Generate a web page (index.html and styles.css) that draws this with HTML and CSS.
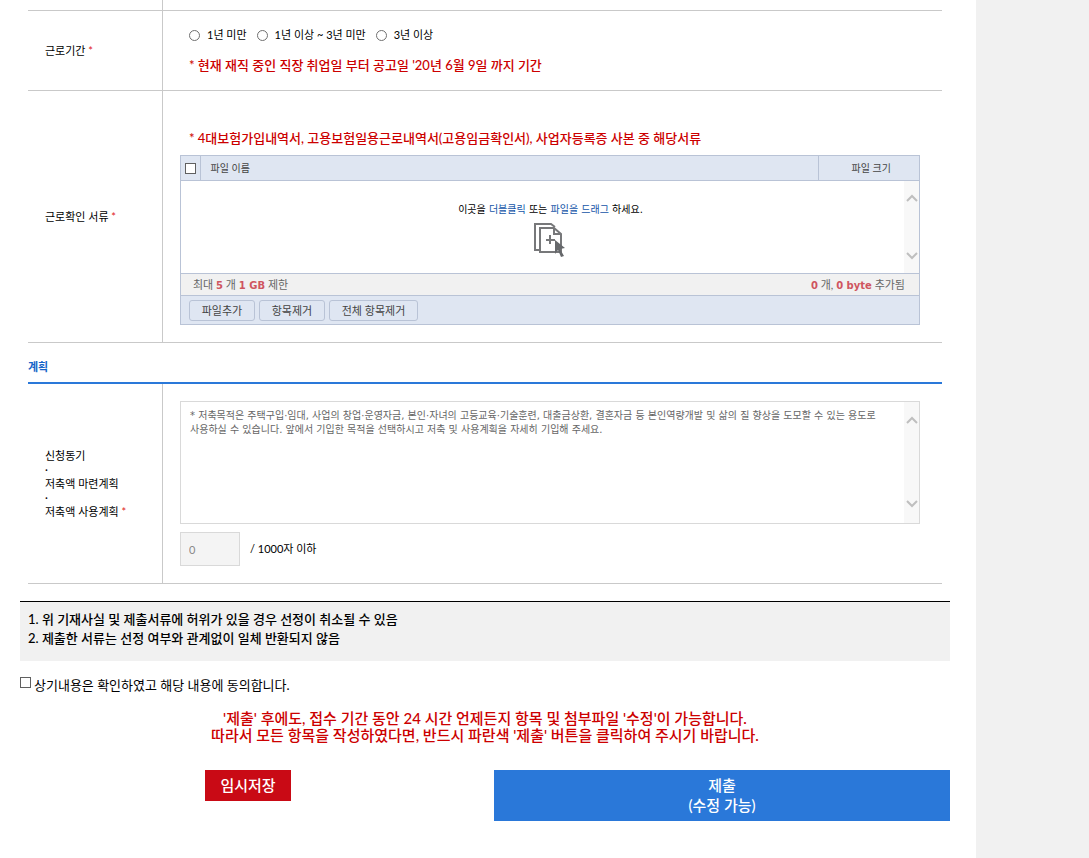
FILE: index.html
```html
<!DOCTYPE html>
<html lang="ko">
<head>
<meta charset="utf-8">
<meta name="viewport" content="width=device-width, initial-scale=1">
<title>신청서 작성</title>
<link rel="stylesheet" href="styles.css">
</head>
<body>
<main class="page">
  <form class="form">
    <section class="rows">
      <div class="row row-previous">
        <div class="row-label"></div>
        <div class="row-body"></div>
      </div>
      <div class="row" role="radiogroup" aria-labelledby="period-label">
        <div class="row-label" id="period-label"><span>근로기간 <span class="required">*</span></span></div>
        <div class="row-body period">
          <div class="radios">
            <label class="radio"><input type="radio" name="period" value="1">1년 미만</label>
            <label class="radio"><input type="radio" name="period" value="2">1년 이상 ~ 3년 미만</label>
            <label class="radio"><input type="radio" name="period" value="3">3년 이상</label>
          </div>
          <p class="hint">* 현재 재직 중인 직장 취업일 부터 공고일 '20년 6월 9일 까지 기간</p>
        </div>
      </div>
      <div class="row">
        <div class="row-label"><span>근로확인 서류 <span class="required">*</span></span></div>
        <div class="row-body documents">
          <p class="hint">* 4대보험가입내역서, 고용보험일용근로내역서(고용임금확인서), 사업자등록증 사본 중 해당서류</p>
          <div class="upload">
            <table class="files">
              <thead>
                <tr>
                  <th class="files-check"><input class="check" type="checkbox" aria-label="전체 선택"></th>
                  <th class="files-name">파일 이름</th>
                  <th class="files-size">파일 크기</th>
                </tr>
              </thead>
            </table>
            <div class="drop">
              <div class="drop-area">
                <p>이곳을 <span class="drop-key">더블클릭</span> 또는 <span class="drop-key">파일을 드래그</span> 하세요.</p>
                <svg class="drop-icon" viewBox="0 0 34 36" width="34" height="36" aria-hidden="true">
                  <g fill="none" stroke="#77787a" stroke-width="2">
                    <path d="M7 28H2V2h16l4 3"/>
                    <path d="M7 6h14l7 6v18H7z"/>
                    <path d="M21 6v6h7"/>
                    <path d="M17 13v9M13 18h9"/>
                  </g>
                  <path d="M22 18l10 8-5 1 4 7-3 1-3-7-3 4z" fill="#66686b"/>
                </svg>
              </div>
              <div class="scroll scroll-drop" aria-hidden="true">
                <svg viewBox="0 0 12 8" width="12" height="8"><path d="M1 7l5-5 5 5"/></svg>
                <svg viewBox="0 0 12 8" width="12" height="8"><path d="M1 1l5 5 5-5"/></svg>
              </div>
            </div>
            <div class="status">
              <span>최대 <b>5</b> 개 <b>1 GB</b> 제한</span>
              <span><b>0</b> 개, <b>0 byte</b> 추가됨</span>
            </div>
            <div class="tools">
              <button class="tool" type="button">파일추가</button>
              <button class="tool" type="button">항목제거</button>
              <button class="tool tool-all" type="button">전체 항목제거</button>
            </div>
          </div>
        </div>
      </div>
    </section>

    <section class="rows">
      <h2 class="heading">계획</h2>
      <div class="row">
        <label class="row-label" for="plan"><span>신청동기<br>·<br>저축액 마련계획<br>·<br>저축액 사용계획 <span class="required">*</span></span></label>
        <div class="row-body plan">
          <div class="plan-box">
            <textarea class="plan-text" id="plan" placeholder="* 저축목적은 주택구입·임대, 사업의 창업·운영자금, 본인·자녀의 고등교육·기술훈련, 대출금상환, 결혼자금 등 본인역량개발 및 삶의 질 향상을 도모할 수 있는 용도로 사용하실 수 있습니다. 앞에서 기입한 목적을 선택하시고 저축 및 사용계획을 자세히 기입해 주세요."></textarea>
            <div class="scroll scroll-plan" aria-hidden="true">
              <svg viewBox="0 0 12 8" width="12" height="8"><path d="M1 7l5-5 5 5"/></svg>
              <svg viewBox="0 0 12 8" width="12" height="8"><path d="M1 1l5 5 5-5"/></svg>
            </div>
          </div>
          <div class="count">
            <input class="count-value" id="count" type="text" value="0" disabled>
            <label for="count">/ 1000자 이하</label>
          </div>
        </div>
      </div>
    </section>

    <div class="notice">
      <p>1. 위 기재사실 및 제출서류에 허위가 있을 경우 선정이 취소될 수 있음</p>
      <p>2. 제출한 서류는 선정 여부와 관계없이 일체 반환되지 않음</p>
    </div>
    <label class="agree"><input class="check" type="checkbox">상기내용은 확인하였고 해당 내용에 동의합니다.</label>
    <p class="warning">'제출' 후에도, 접수 기간 동안 24 시간 언제든지 항목 및 첨부파일 '수정'이 가능합니다.<br>따라서 모든 항목을 작성하였다면, 반드시 파란색 '제출' 버튼을 클릭하여 주시기 바랍니다.</p>
    <div class="actions">
      <button class="save" type="button">임시저장</button>
      <button class="submit" type="submit">제출<br>(수정 가능)</button>
    </div>
  </form>
</main>
</body>
</html>
```

FILE: styles.css
```css
* { box-sizing: border-box; }

body {
  margin: 0;
  background: #f1f1f1;
  color: #000;
  font: 11px/14px Lato, "Noto Sans CJK KR", sans-serif;
}

p, h2 { margin: 0; }

button, input, textarea { font: inherit; margin: 0; }

.page {
  min-height: 100vh;
  margin-right: 113px;
  padding: 0 26px 37px 20px;
  background: #fff;
}

.rows { margin: 0 8px; }

.row {
  display: grid;
  grid-template-columns: 135px minmax(0, 1fr);
  border-bottom: 1px solid #c9c9c9;
}

.row-previous { height: 11px; }

.row-label {
  display: flex;
  align-items: center;
  padding-left: 17px;
  border-right: 1px solid #c9c9c9;
}

.required { color: #e02020; }

.row-body { padding: 17px 22px 17px 17px; }
.row-previous .row-body { padding: 0; }
.period { padding-top: 14px; padding-bottom: 15px; }
.documents { padding-top: 37px; }

.radios {
  display: flex;
  gap: 10px;
  margin-bottom: 10px;
  padding-left: 9px;
  line-height: 20px;
}

.radio {
  display: flex;
  align-items: center;
  gap: 7px;
}

.radio input {
  appearance: none;
  width: 11px;
  height: 11px;
  border: 1px solid #707070;
  border-radius: 50%;
  background: #fff;
}

.radio input:checked { background: #333; box-shadow: inset 0 0 0 2px #fff; }

.hint {
  padding-left: 9px;
  color: #cc0000;
  font-size: 13px;
  font-weight: 500;
  line-height: 20px;
}

.check {
  appearance: none;
  display: block;
  flex: none;
  width: 11px;
  height: 11px;
  border: 1px solid #606060;
  background: #fff;
}

.check:checked { background: #2a78d9; }

.upload {
  margin-top: 7px;
  border: 1px solid #b9c3d6;
  background: #dfe6f2;
  color: #444;
}

.files {
  width: 100%;
  border-collapse: collapse;
  table-layout: fixed;
  font-size: 10px;
}

.files th {
  height: 24px;
  padding: 0;
  font-weight: 400;
}

.files .files-check { width: 19px; padding: 0 0 0 4px; border-right: 1px solid #b9c3d6; }
.files .files-name { padding-left: 10px; text-align: left; }
.files .files-size { width: 101px; padding-left: 5px; border-left: 1px solid #b9c3d6; }

.drop {
  display: flex;
  height: 94px;
  border: solid #b9c3d6;
  border-width: 1px 0;
  background: #fff;
  color: #000;
}

.drop-area {
  flex: 1;
  display: flex;
  flex-direction: column;
  align-items: center;
  gap: 5px;
  padding: 22px 0 0 16px;
  font: 10px/14px "DejaVu Sans", "Noto Sans CJK KR", sans-serif;
}

.drop-key { color: #1455a8; }

.drop-icon { margin-right: 2px; }

.scroll {
  flex: none;
  display: flex;
  flex-direction: column;
  justify-content: space-between;
  align-items: center;
  width: 15px;
  background: #f8f8f8;
}

.scroll path { fill: none; stroke: #bfbfbf; stroke-width: 2; }
.scroll-drop { padding: 13px 0; }
.scroll-plan { padding: 14px 0 15px; }

.status {
  display: flex;
  justify-content: space-between;
  height: 22px;
  padding: 0 14px 0 12px;
  border-bottom: 1px solid #b9c3d6;
  background: #f1f1f1;
  color: #666;
  line-height: 21px;
}

.status b { color: #cf5560; font: bold 10px/1 "DejaVu Sans", sans-serif; }

.tools {
  display: flex;
  gap: 4px;
  padding: 4px 8px 3px;
}

.tool {
  width: 66px;
  height: 21px;
  padding: 0;
  border: 1px solid #b9c3d6;
  border-radius: 3px;
  background: transparent;
  color: #444;
}

.tool-all { width: 89px; }

.heading {
  padding: 14px 0 5px;
  border-bottom: 2px solid #2a78d9;
  color: #1565c8;
  font-size: 11px;
  line-height: 20px;
}

.plan-box {
  display: flex;
  height: 123px;
  border: 1px solid #d9d9d9;
}

.plan-text {
  flex: 1;
  min-width: 0;
  padding: 7px 0 0 9px;
  border: 0;
  resize: none;
  overflow: hidden;
  background: #fff;
  font-family: "DejaVu Sans", "Noto Sans CJK KR", sans-serif;
  font-size: 10px;
  word-break: keep-all;
}

.plan-text::placeholder { color: #666; opacity: 1; }

.count {
  display: flex;
  align-items: center;
  gap: 10px;
  margin-top: 8px;
}

.count-value {
  width: 60px;
  height: 34px;
  padding: 0 8px;
  border: 1px solid #d9d9d9;
  background: #f4f4f4;
  color: #888;
}

.notice {
  margin-top: 17px;
  padding: 8px 8px 13px;
  border-top: 1px solid #000;
  background: #f1f1f1;
  font-size: 13px;
  font-weight: 500;
  line-height: 19px;
}

.agree {
  display: flex;
  gap: 3px;
  width: fit-content;
  margin-top: 16px;
  font-size: 13px;
  line-height: 16px;
}

.warning {
  margin-top: 17px;
  color: #cc0000;
  font-size: 15px;
  font-weight: 500;
  line-height: 17px;
  text-align: center;
}

.actions {
  display: grid;
  grid-template-columns: 1fr 1fr;
  align-items: start;
  gap: 18px;
  margin-top: 26px;
}

.save, .submit {
  border: 0;
  color: #fff;
  font-size: 15px;
  font-weight: 500;
  line-height: 20px;
}

.save {
  justify-self: center;
  padding: 5px 15px 6px;
  background: #c90a15;
}

.submit { padding: 5px 0 6px; background: #2a78d9; }
```
